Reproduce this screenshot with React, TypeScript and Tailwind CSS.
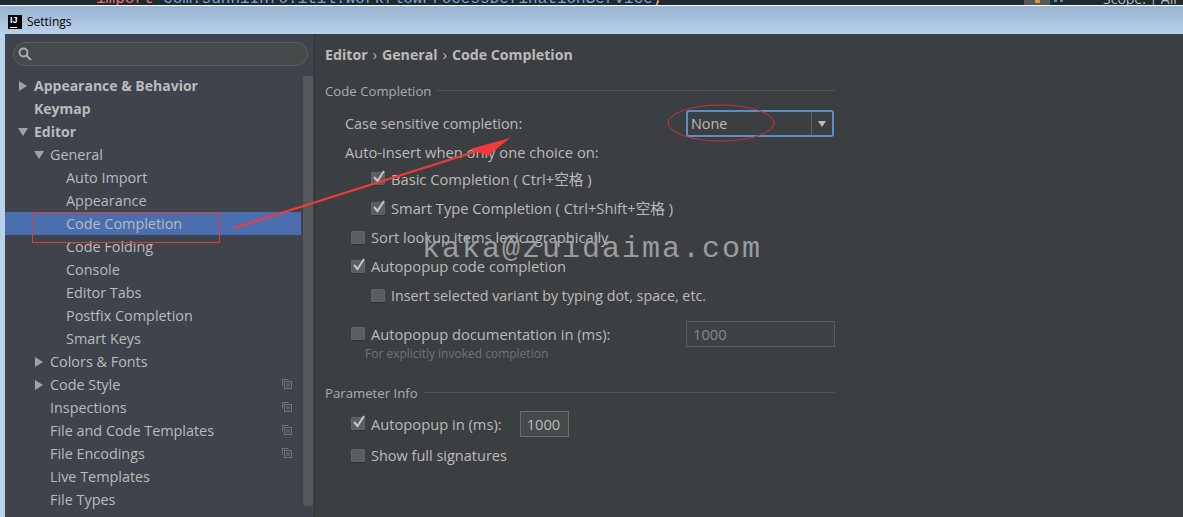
import React from "react";

const font = { fontFamily: '"Open Sans", "Noto Sans CJK SC", sans-serif' };

function Copy() {
  return (
    <svg width="10" height="10" viewBox="0 0 10 10" className="absolute right-[9px] top-[6px]" fill="none" stroke="#6f7378">
      <path d="M0.5 6.5V0.5H6.5" />
      <rect x="2.5" y="2.5" width="7" height="7" />
      <path d="M4 5H8M4 7H8" />
    </svg>
  );
}

function Row({ label, indent, arrow, bold, selected, copy }: { label: string; indent: number; arrow?: "r" | "d"; bold?: boolean; selected?: boolean; copy?: boolean }) {
  return (
    <div className={`relative h-[23px] flex items-center whitespace-nowrap text-[#bbbbbb] ${selected ? "bg-[#4b6eaf]" : ""} ${bold ? "font-bold text-[14px]" : "text-[14.4px]"}`} style={{ paddingLeft: indent }}>
      {arrow === "r" && <span className="absolute w-0 h-0 border-y-[5px] border-y-transparent border-l-[8px] border-l-[#a0a3a6]" style={{ left: indent - 15 }} />}
      {arrow === "d" && <span className="absolute w-0 h-0 border-x-[5px] border-x-transparent border-t-[8px] border-t-[#a0a3a6]" style={{ left: indent - 16 }} />}
      {label}
      {copy && <Copy />}
    </div>
  );
}

function Check({ on }: { on?: boolean }) {
  return (
    <span className="relative shrink-0 w-[14px] h-[14px] rounded-[2px] bg-[#5b5e60] border-b border-b-[#2f3133] shadow-[inset_0_0_0_1px_#626567]">
      {on && (
        <svg width="16" height="16" viewBox="0 0 16 16" className="absolute left-0 -top-[3px]" fill="none" stroke="#c4c6c8" strokeWidth="2">
          <path d="M3 8L6.5 12L13 2" />
        </svg>
      )}
    </span>
  );
}

function Opt({ label, on, indent, h, size, children }: { label: string; on?: boolean; indent: number; h: number; size?: string; children?: React.ReactNode }) {
  return (
    <div className={`flex items-center text-[#bbbbbb] whitespace-nowrap ${size ?? "text-[14.7px]"}`} style={{ paddingLeft: indent, height: h }}>
      <Check on={on} />
      <span className="ml-[6px]">{label}</span>
      {children}
    </div>
  );
}

function Section({ label }: { label: string }) {
  return (
    <div className="flex items-center h-[20px] text-[13.2px] text-[#a9adb0] whitespace-nowrap">
      {label}
      <div className="ml-[6px] flex-1 h-px bg-[#535557] -translate-y-[2px]" />
    </div>
  );
}

export default function App() {
  return (
    <div className="relative w-[1183px] h-[517px] overflow-hidden flex flex-col bg-[#b9d1ea]" style={font}>
      <div className="relative h-[5px] bg-[#20292f] overflow-hidden shrink-0">
        <div className="absolute left-[96px] -top-[13px] text-[16px] whitespace-nowrap text-[#6fa8dc]" style={{ fontFamily: '"Liberation Mono", monospace' }}>
          <span className="text-[#e8707a]">import</span> com.sunhiInfo.itil.workflowProcessDefinationService<span className="text-[#e0c070]">;</span>
        </div>
        <div className="absolute left-[1024px] top-0 w-[26px] h-[5px] bg-[#55595c]">
          <div className="mx-auto w-[5px] h-[3px] bg-[#d99a3c]" />
        </div>
        <div className="absolute left-[1054px] top-0 flex gap-[3px]">
          <span className="w-[3px] h-[2px] bg-[#4a88c7]" />
          <span className="w-[3px] h-[2px] bg-[#4a88c7]" />
        </div>
        <div className="absolute left-[1103px] -top-[12px] text-[14px] text-[#b8bcc0] whitespace-nowrap">Scope: | All</div>
      </div>
      <div className="h-px bg-white shrink-0" />
      <div className="h-[28px] shrink-0 flex items-center pl-[8px] pt-[4px] bg-gradient-to-b from-[#99b4d1] to-[#b9d1ea]">
        <div className="relative w-[14px] h-[14px] bg-black">
          <span className="absolute left-[2px] top-[1px] text-[9px] leading-[9px] font-bold text-white" style={{ fontFamily: '"Liberation Sans", sans-serif' }}>IJ</span>
          <span className="absolute left-[2px] bottom-[1px] w-[7px] h-px bg-white" />
        </div>
        <span className="ml-[5px] text-[12px] text-black">Settings</span>
      </div>
      <div className="flex-1 flex min-h-0 pl-[5px]">
        <div className="w-[309px] shrink-0 bg-[#3e434c] flex flex-col">
          <div className="pt-[8px] pl-[8px] pr-[6px]">
            <div className="h-[24px] rounded-full border border-[#5c5f60] bg-[#45494a] flex items-center pl-[4px]">
              <svg width="14" height="14" viewBox="0 0 14 14" fill="none" stroke="#a8abad" strokeWidth="2">
                <circle cx="5.5" cy="5.5" r="4" />
                <path d="M8.5 8.5L13 13" />
              </svg>
            </div>
          </div>
          <div className="flex flex-1 min-h-0 mt-[8px]">
            <div className="w-[296px] shrink-0">
              <Row label="Appearance & Behavior" indent={29} arrow="r" bold />
              <Row label="Keymap" indent={29} bold />
              <Row label="Editor" indent={29} arrow="d" bold />
              <Row label="General" indent={45} arrow="d" />
              <Row label="Auto Import" indent={61} />
              <Row label="Appearance" indent={61} />
              <Row label="Code Completion" indent={61} selected />
              <Row label="Code Folding" indent={61} />
              <Row label="Console" indent={61} />
              <Row label="Editor Tabs" indent={61} />
              <Row label="Postfix Completion" indent={61} />
              <Row label="Smart Keys" indent={61} />
              <Row label="Colors & Fonts" indent={45} arrow="r" />
              <Row label="Code Style" indent={45} arrow="r" copy />
              <Row label="Inspections" indent={45} copy />
              <Row label="File and Code Templates" indent={45} copy />
              <Row label="File Encodings" indent={45} copy />
              <Row label="Live Templates" indent={45} />
              <Row label="File Types" indent={45} />
            </div>
            <div className="ml-[2px] w-[10px] h-[430px] mt-[2px] rounded-[2px] bg-[#55585a]" />
          </div>
        </div>
        <div className="flex-1 bg-[#3c3f41] border-l border-l-[#2f3133] pl-[10px] pr-[348px] flex flex-col text-[#bbbbbb]">
          <div className="mt-[10px] h-[22px] flex items-center text-[14.2px] font-bold text-[#bbbbbb] whitespace-nowrap">
            Editor<span className="font-normal mx-[5px]">›</span>General<span className="font-normal mx-[5px]">›</span>Code Completion
          </div>
          <div className="mt-[16px]"><Section label="Code Completion" /></div>
          <div className="mt-[8px] h-[27px] flex items-center pl-[20px] text-[14.4px] whitespace-nowrap">
            Case sensitive completion:
            <div className="ml-auto mr-[1px] w-[148px] h-[27px] rounded-[3px] border-2 border-[#5a8fc7] flex items-center">
              <span className="pl-[3px] flex-1">None</span>
              <span className="w-[21px] h-full border-l border-l-[#5f6365] flex items-center justify-center">
                <span className="w-0 h-0 border-x-[4px] border-x-transparent border-t-[6px] border-t-[#bbbbbb]" />
              </span>
            </div>
          </div>
          <div className="mt-[1px] h-[28px] flex items-center pl-[20px] text-[14.7px] whitespace-nowrap">Auto-insert when only one choice on:</div>
          <Opt label="Basic Completion ( Ctrl+空格 )" on indent={46} h={26} />
          <div className="mt-[2px]"><Opt label="Smart Type Completion ( Ctrl+Shift+空格 )" on indent={46} h={29} /></div>
          <Opt label="Sort lookup items lexicographically" indent={26} h={29} />
          <Opt label="Autopopup code completion" on indent={26} h={29} />
          <Opt label="Insert selected variant by typing dot, space, etc." indent={46} h={29} size="text-[14.3px]" />
          <div className="mt-[11px]">
            <Opt label="Autopopup documentation in (ms):" indent={26} h={26}>
              <div className="ml-auto w-[149px] h-[26px] border border-[#5a5d5f] bg-[#3f4244] flex items-center pl-[6px] text-[#85888a]">1000</div>
            </Opt>
          </div>
          <div className="-mt-[3px] h-[20px] flex items-center pl-[40px] text-[12px] text-[#707375] whitespace-nowrap">For explicitly invoked completion</div>
          <div className="mt-[20px]"><Section label="Parameter Info" /></div>
          <div className="mt-[7px]">
            <Opt label="Autopopup in (ms):" on indent={26} h={26}>
              <div className="ml-[18px] w-[49px] h-[26px] border border-[#6a6d6f] bg-[#45494a] flex items-center pl-[6px]">1000</div>
            </Opt>
          </div>
          <div className="mt-[4px]"><Opt label="Show full signatures" indent={26} h={30} size="text-[14.5px]" /></div>
        </div>
      </div>

      <svg className="absolute left-0 top-0 pointer-events-none" width="1183" height="517" fill="none">
        <rect x="32.5" y="212.5" width="187" height="30" stroke="#e03c3c" />
        <ellipse cx="721" cy="123" rx="53" ry="18" stroke="#c9303a" />
        <path d="M234 228L490 147" stroke="#f23a3a" strokeWidth="2" />
        <path d="M470 149L510 138L488 156Z" fill="#f23a3a" />
      </svg>
      <div className="absolute left-[422px] top-[231px] text-[30px] leading-[36px] tracking-[2px] whitespace-nowrap text-[#9a9c9e] pointer-events-none" style={{ fontFamily: '"Liberation Mono", monospace' }}>kaka@zuidaima.com</div>
    </div>
  );
}
